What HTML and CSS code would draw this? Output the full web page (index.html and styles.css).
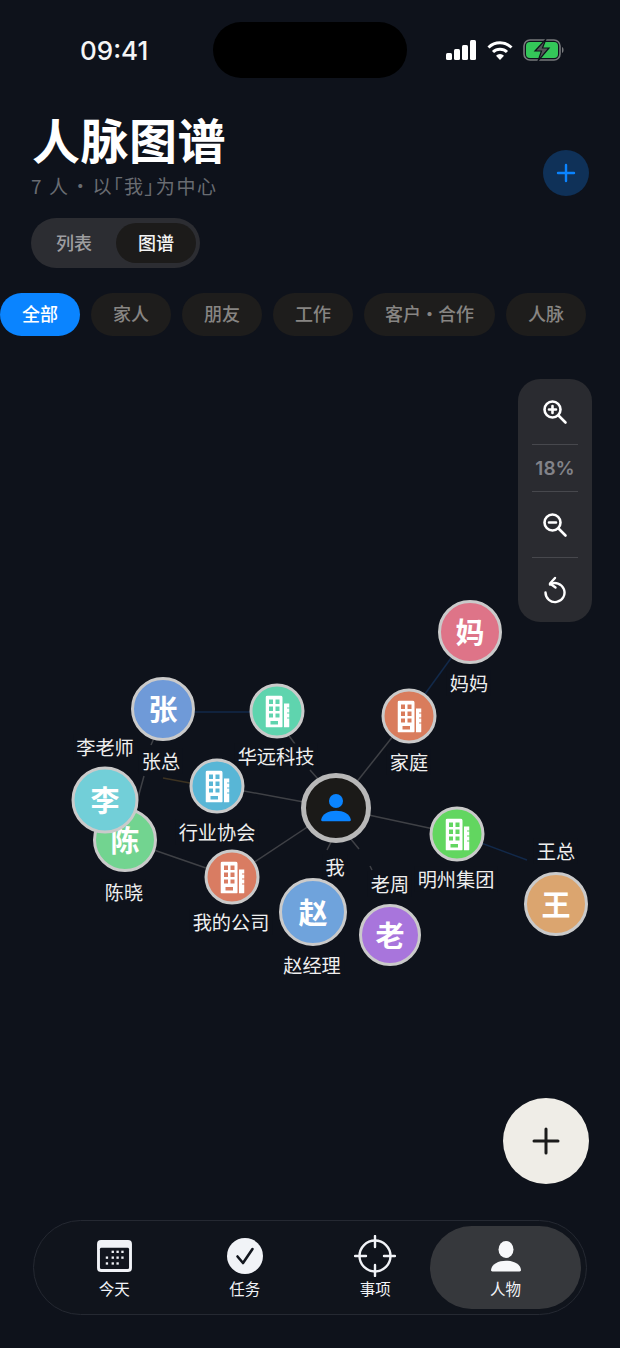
FILE: index.html
```html
<!DOCTYPE html>
<html lang="en">
<head>
    <meta charset="UTF-8">
    <meta name="viewport" content="width=device-width, initial-scale=1.0">
    <title>人脉图谱</title>
    <link rel="stylesheet" href="styles.css">
</head>
<body>
    <svg class="defs" width="0" height="0">
        <symbol id="building" viewBox="0 0 24 32">
            <path fill-rule="evenodd" d="M2 0h13a2 2 0 0 1 2 2v29a1 1 0 0 1-1 1H1a1 1 0 0 1-1-1V2a2 2 0 0 1 2-2zM3.500 4v4.500h4V4zM10 4v4.500h4V4zM3.500 11v4.500h4V11zM10 11v4.500h4V11zM3.500 18v4h4v-4zM10 18v4h4v-4zM5 25.500V29h7.500v-3.500z"/>
            <path d="M18.500 8H24v4h-2.500v1H24v4h-2.500v1H24v4h-2.500v1H24v8a1 1 0 0 1-1 1h-4.500z"/>
        </symbol>
    </svg>

    <div class="screen">
        <div class="status">
            <span class="time">09:41</span>
            <div class="island"></div>
            <div class="status-icons">
                <svg width="31" height="20" viewBox="0 0 31 20" fill="#fff">
                    <rect x="0" y="13" width="6" height="7" rx="1.500"/>
                    <rect x="8" y="9" width="6" height="11" rx="1.500"/>
                    <rect x="16" y="5" width="6" height="15" rx="1.500"/>
                    <rect x="24" y="0" width="6" height="20" rx="1.500"/>
                </svg>
                <svg width="26" height="20" viewBox="0 0 26 20" fill="none" stroke="#fff" stroke-width="3">
                    <path d="M1.500 7.500a16.500 16.500 0 0 1 23 0"/>
                    <path d="M6 12a10 10 0 0 1 14 0"/>
                    <path d="M13 20l-4-4.200a5.600 5.600 0 0 1 8 0z" fill="#fff" stroke="none"/>
                </svg>
                <svg width="42" height="22" viewBox="0 0 42 22">
                    <rect x="1" y="1" width="36" height="20" rx="6" fill="none" stroke="#77797c" stroke-width="1.600"/>
                    <rect x="3" y="3" width="32" height="16" rx="4" fill="#34c759"/>
                    <path d="M39 8c2 .5 2 5.500 0 6z" fill="#77797c"/>
                    <path d="M23 0L12 12h6.500L15 22l11-13h-6.500z" fill="#55585a" stroke="#0e121b" stroke-width="1.200"/>
                </svg>
            </div>
        </div>

        <header class="head">
            <div>
                <h1 class="title">人脉图谱</h1>
                <p class="sub">7 人 · 以「我」为中心</p>
            </div>
            <button class="add-btn">
                <svg width="20" height="20" viewBox="0 0 20 20" stroke="#0a84ff" stroke-width="2.400" stroke-linecap="round"><path d="M10 2v16M2 10h16"/></svg>
            </button>
        </header>

        <div class="seg">
            <span class="seg-item">列表</span>
            <span class="seg-item on">图谱</span>
        </div>

        <div class="chips">
            <span class="chip on">全部</span>
            <span class="chip">家人</span>
            <span class="chip">朋友</span>
            <span class="chip">工作</span>
            <span class="chip wide">客户 · 合作</span>
            <span class="chip">人脉</span>
        </div>

        <main class="graph">
            <svg class="edges" width="620" height="884" viewBox="0 336 620 884" fill="none" stroke-width="1.500">
                <g stroke="#3f4146">
                    <path d="M336 808L409 716"/>
                    <path d="M287 733L295 744M310 770L318 779"/>
                    <path d="M336 808L217 786"/>
                    <path d="M336 808L232 877"/>
                    <path d="M232 877L125 840"/>
                    <path d="M336 808L457 834"/>
                    <path d="M332 840L327 850"/>
                    <path d="M350 838L359 849M370 866L372 870"/>
                    <path d="M154 738L151 745M144 776L136 805"/>
                </g>
                <g stroke="#12294a">
                    <path d="M409 716L470 632"/>
                    <path d="M163 712L277 712"/>
                    <path d="M457 834L527 860"/>
                </g>
                <path d="M163 778L217 788" stroke="#3d3322"/>
            </svg>

            <div class="node person n-zhang">张</div>
            <div class="label l-zhang">张总</div>
            <div class="node org n-huayuan"><svg class="bld"><use href="#building"/></svg></div>
            <div class="label l-huayuan">华远科技</div>
            <div class="node org n-hangye"><svg class="bld"><use href="#building"/></svg></div>
            <div class="label l-hangye">行业协会</div>
            <div class="node person n-chen">陈</div>
            <div class="label l-chen">陈晓</div>
            <div class="label l-li">李老师</div>
            <div class="node person n-li">李</div>
            <div class="node org n-gongsi"><svg class="bld"><use href="#building"/></svg></div>
            <div class="label l-gongsi">我的公司</div>
            <div class="node person n-zhao">赵</div>
            <div class="label l-zhao">赵经理</div>
            <div class="node person n-lao">老</div>
            <div class="label l-lao">老周</div>
            <div class="node org n-mingzhou"><svg class="bld"><use href="#building"/></svg></div>
            <div class="label l-mingzhou">明州集团</div>
            <div class="node person n-wang">王</div>
            <div class="label l-wang">王总</div>
            <div class="node org n-jiating"><svg class="bld"><use href="#building"/></svg></div>
            <div class="label l-jiating">家庭</div>
            <div class="node person n-ma">妈</div>
            <div class="label l-ma">妈妈</div>
            <div class="node n-me">
                <svg width="30" height="30" viewBox="0 0 32 32" fill="#0a84ff">
                    <circle cx="16" cy="8.500" r="7.500"/>
                    <path d="M1.500 30c-1 0-1.500-.8-1.300-1.800C1.500 22.500 8 19 16 19s14.500 3.500 15.800 9.200c.2 1-.3 1.800-1.300 1.800z"/>
                </svg>
            </div>
            <div class="label l-me">我</div>

            <div class="zoom">
                <div class="zoom-btn">
                    <svg width="26" height="26" viewBox="0 0 26 26" fill="none" stroke="#fff" stroke-width="2.600" stroke-linecap="round"><circle cx="10.500" cy="10.500" r="8"/><path d="M16.500 16.500l7 7M7 10.500h7M10.500 7v7"/></svg>
                </div>
                <div class="zoom-pct">18%</div>
                <div class="zoom-btn">
                    <svg width="26" height="26" viewBox="0 0 26 26" fill="none" stroke="#fff" stroke-width="2.600" stroke-linecap="round"><circle cx="10.500" cy="10.500" r="8"/><path d="M16.500 16.500l7 7M7 10.500h7"/></svg>
                </div>
                <div class="zoom-btn last">
                    <svg width="26" height="28" viewBox="0 0 26 28" fill="none" stroke="#fff" stroke-width="2.400" stroke-linecap="round" stroke-linejoin="round"><path d="M8 8.500a9.500 9.500 0 1 1-4.500 8"/><path d="M13 2L8 7.500l5.500 4"/></svg>
                </div>
            </div>

            <button class="fab">
                <svg width="28" height="28" viewBox="0 0 28 28" stroke="#1b1b1b" stroke-width="3" stroke-linecap="round"><path d="M14 2v24M2 14h24"/></svg>
            </button>
        </main>

        <nav class="tabs">
            <div class="tab">
                <div class="tab-icon">
                    <svg width="35" height="32" viewBox="0 0 36 33">
                        <rect width="36" height="33" rx="4" fill="#f1f3f7"/>
                        <rect x="3" y="8" width="30" height="22" rx="1.500" fill="#12161e"/>
                        <g fill="#f1f3f7">
                            <rect x="15" y="11" width="2.400" height="2.400"/><rect x="20" y="11" width="2.400" height="2.400"/><rect x="25" y="11" width="2.400" height="2.400"/>
                            <rect x="9" y="17" width="2.400" height="2.400"/><rect x="15" y="17" width="2.400" height="2.400"/><rect x="20" y="17" width="2.400" height="2.400"/><rect x="25" y="17" width="2.400" height="2.400"/>
                            <rect x="9" y="23" width="2.400" height="2.400"/><rect x="15" y="23" width="2.400" height="2.400"/><rect x="20" y="23" width="2.400" height="2.400"/>
                        </g>
                    </svg>
                </div>
                <span>今天</span>
            </div>
            <div class="tab">
                <div class="tab-icon">
                    <svg width="36" height="36" viewBox="0 0 36 36">
                        <circle cx="18" cy="18" r="18" fill="#f1f3f7"/>
                        <path d="M10.500 18.500l5.500 6.500 9.500-14" fill="none" stroke="#12161e" stroke-width="2.600" stroke-linecap="round" stroke-linejoin="round"/>
                    </svg>
                </div>
                <span>任务</span>
            </div>
            <div class="tab">
                <div class="tab-icon">
                    <svg width="42" height="42" viewBox="0 0 42 42" fill="none" stroke="#f1f3f7" stroke-width="2.400" stroke-linecap="round">
                        <circle cx="21" cy="21" r="15.500"/>
                        <path d="M21 1v11M21 30v11M1 21h11M30 21h11"/>
                    </svg>
                </div>
                <span>事项</span>
            </div>
            <div class="tab on">
                <div class="tab-icon">
                    <svg width="30" height="33" viewBox="0 0 32 33" fill="#f7f8fa">
                        <ellipse cx="16" cy="9" rx="8" ry="9"/>
                        <path d="M1.500 32.500c-1 0-1.500-.6-1.500-1.500C.5 24.500 8 21 16 21s15.500 3.500 16 10c0 .9-.5 1.500-1.500 1.500z"/>
                    </svg>
                </div>
                <span>人物</span>
            </div>
        </nav>
    </div>
</body>
</html>
```

FILE: styles.css
```css
* {
    box-sizing: border-box;
}
body {
    margin: 0;
    background-color: #0e121b;
    font-family: "Noto Sans CJK SC", "Noto Sans", sans-serif;
}
.defs {
    display: block;
    height: 0;
}
.screen {
    position: relative;
    width: 620px;
    height: 1348px;
    overflow: hidden;
    display: flex;
    flex-direction: column;
    background-color: #0e121b;
    color: #fff;
}

/* status bar */
.status {
    height: 100px;
    flex: none;
    display: flex;
    justify-content: space-between;
    align-items: center;
    padding: 0 55px 0 80px;
}
.time {
    font-family: Inter, "Liberation Sans", sans-serif;
    font-size: 26px;
    font-weight: 500;
    color: #f5f5f5;
}
.island {
    position: absolute;
    left: 213px;
    top: 22px;
    width: 194px;
    height: 56px;
    border-radius: 28px;
    background-color: #000;
}
.status-icons {
    display: flex;
    align-items: center;
    gap: 10px;
}

/* header */
.head {
    flex: none;
    display: flex;
    justify-content: space-between;
    align-items: flex-end;
    padding: 8px 31px 0 31px;
    height: 100px;
}
.title {
    margin: 0 0 6px;
    font-size: 48px;
    line-height: 56px;
    font-weight: 700;
    letter-spacing: 0.5px;
    padding-left: 1px;
}
.sub {
    margin: 0;
    font-size: 19px;
    line-height: 28px;
    color: #696c72;
    font-feature-settings: "palt";
    letter-spacing: 1.600px;
}
.add-btn {
    width: 46px;
    height: 46px;
    margin-bottom: 4px;
    border: none;
    border-radius: 50%;
    background-color: #0f3158;
    display: flex;
    align-items: center;
    justify-content: center;
    padding: 0;
}

/* list / graph switch */
.seg {
    flex: none;
    align-self: flex-start;
    display: flex;
    align-items: center;
    justify-content: space-between;
    margin: 18px 0 0 31px;
    width: 169px;
    height: 50px;
    padding: 5px 4px 5px 6px;
    border-radius: 25px;
    background-color: #2c2d32;
}
.seg-item {
    width: 74px;
    text-align: center;
    font-size: 18px;
    line-height: 38px;
    height: 40px;
    font-weight: 500;
    color: #9e9ea0;
}
.seg-item.on {
    width: 80px;
    border-radius: 20px;
    background-color: #1c1b1a;
    color: #f4f4f4;
}

/* filters */
.chips {
    flex: none;
    display: flex;
    gap: 11px;
    margin-top: 25px;
}
.chip {
    width: 80px;
    height: 43px;
    line-height: 41px;
    border-radius: 22px;
    text-align: center;
    font-size: 18px;
    font-weight: 500;
    color: #878583;
    background-color: #1e1d1c;
    font-feature-settings: "palt";
}
.chip.on {
    background-color: #0a84ff;
    color: #fff;
}
.chip.wide {
    width: 131px;
}

/* graph canvas */
.graph {
    position: relative;
    flex: 1;
}
.edges {
    position: absolute;
    left: 0;
    top: 0;
}
.node {
    position: absolute;
    transform: translate(-50%, -50%);
    border-radius: 50%;
    border: 3.500px solid #cacaca;
    display: flex;
    align-items: center;
    justify-content: center;
    color: #fff;
    font-weight: 700;
}
.person {
    width: 64px;
    height: 64px;
    font-size: 29px;
    padding-bottom: 3px;
}
.org {
    width: 55px;
    height: 55px;
    border-width: 3px;
}
.bld {
    width: 24px;
    height: 32px;
    fill: #fff;
}
.label {
    position: absolute;
    transform: translate(-50%, -50%);
    margin-top: -1px;
    padding: 0 3px;
    font-size: 19.200px;
    line-height: 25px;
    white-space: nowrap;
    color: #efefef;
    background-color: #0e121b;
}

/* node positions, y is page y minus 336 */
.n-me { left: 336px; top: 472px; width: 70px; height: 70px; border: 5px solid #b8b8b8; background-color: #1b1a18; }
.n-ma { left: 470px; top: 296px; background-color: #de7488; }
.n-jiating { left: 409px; top: 380px; background-color: #d97c5c; }
.n-zhang { left: 163px; top: 373px; background-color: #6f9ad8; }
.n-huayuan { left: 277px; top: 375px; background-color: #5fd4ae; }
.n-hangye { left: 217px; top: 450px; background-color: #58b6d6; }
.n-chen { left: 125px; top: 504px; background-color: #72d490; }
.n-li { left: 105px; top: 464px; width: 67px; height: 67px; background-color: #72cfd8; }
.n-gongsi { left: 232px; top: 541px; background-color: #d97c62; }
.n-zhao { left: 313px; top: 576px; width: 68px; height: 68px; background-color: #6fa3dc; }
.n-lao { left: 390px; top: 599px; width: 62px; height: 62px; background-color: #a875dc; }
.n-mingzhou { left: 457px; top: 498px; background-color: #62d660; }
.n-wang { left: 556px; top: 568px; background-color: #dba56f; }

.l-me { left: 335px; top: 532px; }
.l-ma { left: 469px; top: 348px; }
.l-jiating { left: 409px; top: 427px; }
.l-zhang { left: 161px; top: 426px; }
.l-li { left: 105px; top: 412px; }
.l-huayuan { left: 276px; top: 421px; }
.l-hangye { left: 217px; top: 497px; }
.l-chen { left: 124px; top: 557px; }
.l-gongsi { left: 231px; top: 587px; }
.l-zhao { left: 312px; top: 630px; }
.l-lao { left: 390px; top: 549px; }
.l-mingzhou { left: 456px; top: 544px; }
.l-wang { left: 556px; top: 516px; }

/* zoom controls */
.zoom {
    position: absolute;
    left: 518px;
    top: 43px;
    width: 74px;
    height: 243px;
    padding: 0 14px;
    border-radius: 22px;
    background-color: #2a2b30;
    display: flex;
    flex-direction: column;
}
.zoom-btn {
    display: flex;
    align-items: center;
    justify-content: center;
    height: 66px;
    border-bottom: 1px solid #47484d;
}
.zoom-btn.last {
    height: 64px;
    border-bottom: none;
}
.zoom-pct {
    height: 47px;
    line-height: 47px;
    text-align: center;
    font-family: Inter, "Liberation Sans", sans-serif;
    font-size: 19px;
    font-weight: 600;
    color: #828389;
    border-bottom: 1px solid #47484d;
}

.fab {
    position: absolute;
    left: 503px;
    top: 762px;
    width: 86px;
    height: 86px;
    padding: 0;
    border: none;
    border-radius: 50%;
    background-color: #efede7;
    display: flex;
    align-items: center;
    justify-content: center;
}

/* bottom tabs */
.tabs {
    flex: none;
    display: flex;
    align-items: center;
    margin: 0 33px 33px;
    height: 95px;
    padding: 0 0 0 15px;
    border: 1px solid #252932;
    border-radius: 48px;
    background-color: #10141c;
}
.tab {
    flex: none;
    width: 130.500px;
    height: 83px;
    display: flex;
    flex-direction: column;
    align-items: center;
    padding-top: 9px;
    font-size: 15.500px;
    line-height: 22px;
    color: #f1f3f7;
}
.tab-icon {
    height: 42px;
    display: flex;
    align-items: center;
}
.tab.on {
    width: 151px;
    margin-left: -10.500px;
    border-radius: 42px;
    background-color: #36383c;
}
```
